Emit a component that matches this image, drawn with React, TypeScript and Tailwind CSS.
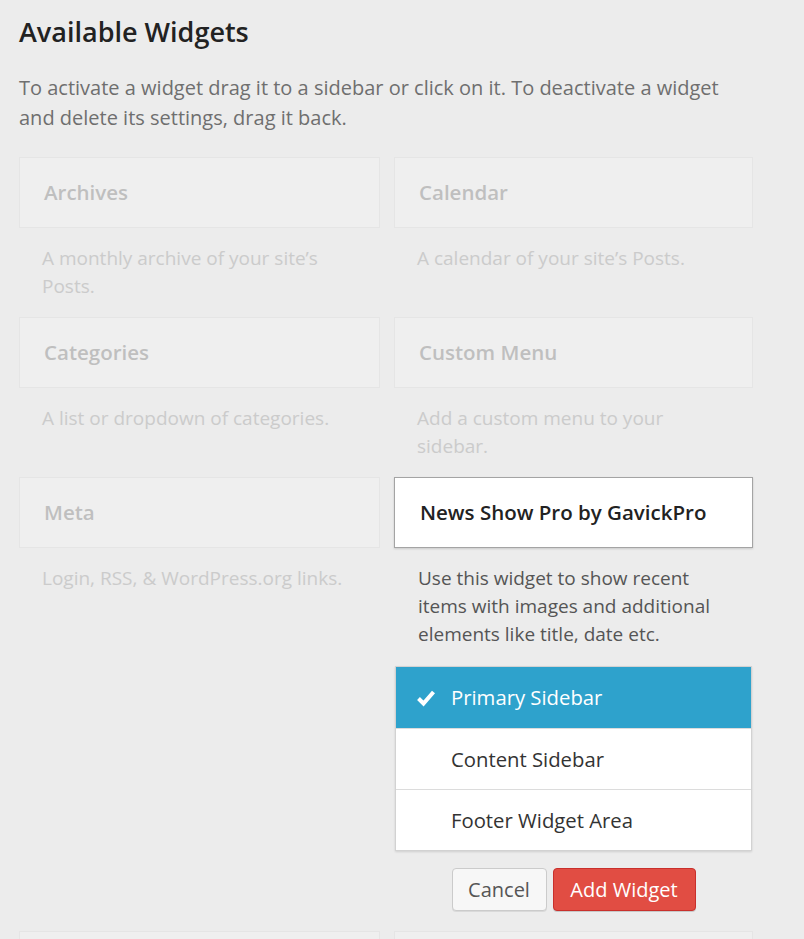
import { useState } from "react";

const widgets = [
  { name: "Archives", desc: "A monthly archive of your site’s Posts." },
  { name: "Calendar", desc: "A calendar of your site’s Posts." },
  { name: "Categories", desc: "A list or dropdown of categories." },
  { name: "Custom Menu", desc: "Add a custom menu to your sidebar." },
  { name: "Meta", desc: "Login, RSS, & WordPress.org links." },
];

const sidebars = ["Primary Sidebar", "Content Sidebar", "Footer Widget Area"];

function Check() {
  return (
    <svg width="20" height="20" viewBox="0 0 20 20" className="shrink-0">
      <path d="M2.5 10.5 L7.5 15.5 L17.5 4" fill="none" stroke="white" strokeWidth="4" strokeLinejoin="miter" />
    </svg>
  );
}

export default function App() {
  const [selected, setSelected] = useState(0);

  return (
    <div
      className="w-[804px] h-[939px] overflow-hidden bg-[#ececec] px-[19px]"
      style={{ fontFamily: '"Open Sans", "Noto Sans", sans-serif' }}
    >
      <h1 className="pt-[12px] text-[27px] leading-[40px] font-semibold text-[#222]">Available Widgets</h1>
      <p className="mt-[21px] text-[20px] leading-[30px] text-[#6f6f6f] w-[715px]">
        To activate a widget drag it to a sidebar or click on it. To deactivate a widget and delete its settings, drag it back.
      </p>

      <div className="mt-[24px] grid grid-cols-[361px_359px] gap-x-[14px]">
        {widgets.map((w) => (
          <div key={w.name} className="min-h-[160px]">
            <div className="h-[71px] border border-[#e5e5e5] bg-[#efefef] flex items-center px-[24px] text-[20.5px] font-semibold text-[#bfbfbf]">
              {w.name}
            </div>
            <p className="pt-[16px] px-[23px] text-[19px] leading-[28px] text-[#cbcbcb]">{w.desc}</p>
          </div>
        ))}

        {/* selected widget */}
        <div className="col-start-2 row-start-3 pb-[20px]">
          <div className="h-[71px] border border-[#a4a4a4] bg-white shadow-[0_1px_2px_rgba(0,0,0,0.15)] flex items-center px-[25px] text-[20.5px] font-semibold text-[#222]">
            News Show Pro by GavickPro
          </div>
          <p className="pt-[16px] px-[24px] text-[19px] leading-[28px] text-[#555]">
            Use this widget to show recent items with images and additional elements like title, date etc.
          </p>
          <ul className="mt-[18px] mx-px border border-[#d2d2d2] bg-white shadow-[0_1px_2px_rgba(0,0,0,0.12)]">
            {sidebars.map((s, i) => (
              <li
                key={s}
                onClick={() => setSelected(i)}
                className={`h-[61px] flex items-center gap-[15px] pl-[20px] text-[20.3px] cursor-pointer ${
                  i > 0 ? "border-t border-[#dcdcdc]" : ""
                } ${selected === i ? "bg-[#2ea2cc] text-white" : "text-[#333]"}`}
              >
                <span className="w-[20px] flex justify-center">{selected === i && <Check />}</span>
                {s}
              </li>
            ))}
          </ul>
          <div className="mt-[17px] flex justify-center gap-[6px]">
            <button className="h-[43px] w-[95px] rounded-[4px] border border-[#cbcbcb] bg-[#f7f7f7] text-[20px] text-[#555] shadow-[0_1px_0_rgba(0,0,0,0.08)]">
              Cancel
            </button>
            <button className="h-[43px] w-[143px] rounded-[4px] border border-[#c9302c] bg-[#e14d43] text-[20px] font-medium text-white shadow-[0_1px_0_rgba(0,0,0,0.15)]">
              Add Widget
            </button>
          </div>
        </div>

        <div className="h-[71px] border border-[#e5e5e5] bg-[#efefef]" />
        <div className="h-[71px] border border-[#e5e5e5] bg-[#efefef]" />
      </div>
    </div>
  );
}
